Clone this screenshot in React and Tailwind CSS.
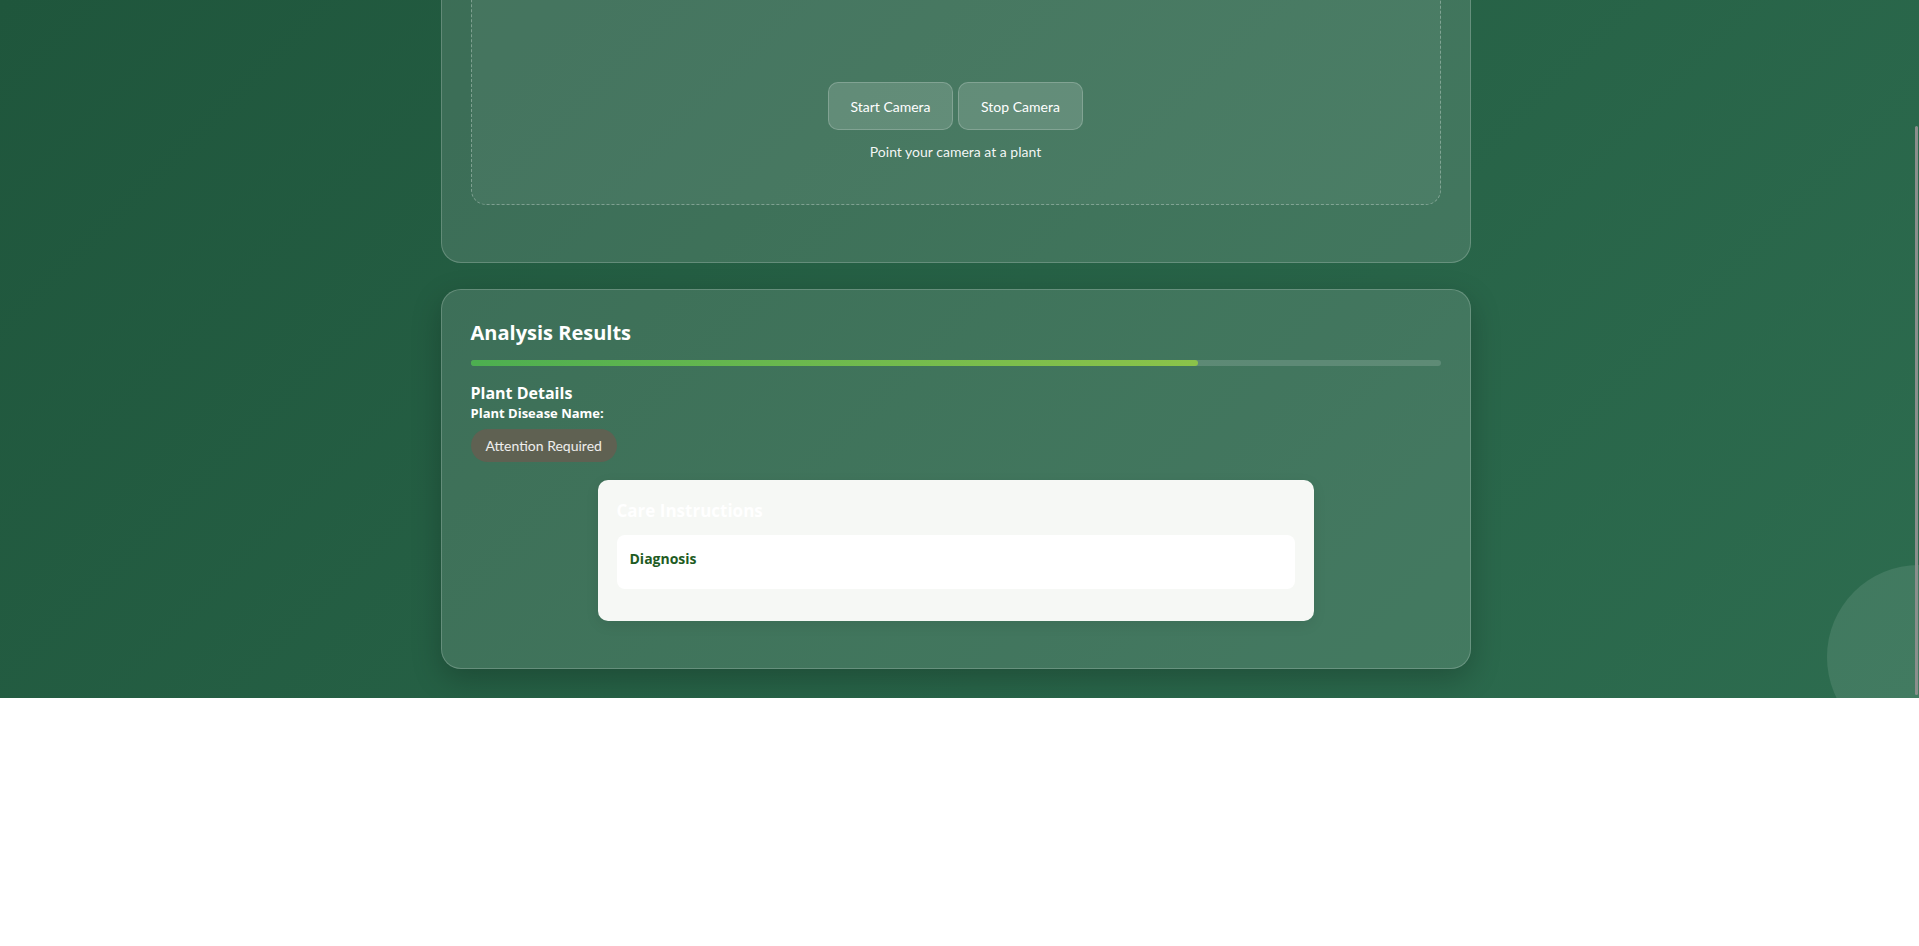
import React from "react";

const bold = "font-['Open_Sans',Lato,sans-serif] font-bold";

export default function App() {
  return (
    <div className="h-[946px] w-full bg-white font-[Lato,'Open_Sans',sans-serif]">
      <div className="relative flex h-[698px] overflow-hidden bg-[linear-gradient(135deg,#1f563c_0%,#2d6c4f_100%)]">
        {/* decorative circle */}
        <div className="pointer-events-none absolute bottom-[-51px] right-[-92px] h-[184px] w-[184px] rounded-full bg-white/10" />

        <main className="flex min-w-0 flex-1 flex-col items-center justify-end pb-[29px]">
          {/* Camera card */}
          <section className="w-[1030px] shrink-0 rounded-[20px] border border-white/20 bg-white/[0.12] p-[29px]">
            <div className="mb-[28px] flex flex-col items-center rounded-[15px] border border-dashed border-white/30 bg-white/[0.05] px-6 pt-[40px] pb-[42px]">
              <div className="h-[91px] w-full" />
              <div className="flex gap-[5px]">
                <button className="h-[48px] w-[125px] rounded-[10px] border border-white/20 bg-white/15 text-[14px] text-white">
                  Start Camera
                </button>
                <button className="h-[48px] w-[125px] rounded-[10px] border border-white/20 bg-white/15 text-[14px] text-white">
                  Stop Camera
                </button>
              </div>
              <p className="mt-3 text-[14px] leading-5 text-white/95">Point your camera at a plant</p>
            </div>
          </section>

          {/* Analysis card */}
          <section className="mt-[26px] flex w-[1030px] shrink-0 flex-col rounded-[20px] border border-white/20 bg-white/[0.12] p-[29px] shadow-[0_10px_30px_rgba(0,0,0,0.22)]">
            <h2 className={`${bold} text-[20px] leading-[28px] text-white`}>Analysis Results</h2>
            <div className="mt-[13px] h-[6px] w-full rounded-full bg-white/15">
              <div className="h-full w-3/4 rounded-full bg-linear-to-r from-[#4caf50] to-[#8bc34a]" />
            </div>
            <h3 className={`${bold} mt-[16px] text-[16px] leading-[22px] text-white`}>Plant Details</h3>
            <p className={`${bold} text-[13px] leading-[18px] text-white`}>Plant Disease Name:</p>
            <span className="mt-[7px] inline-flex h-[33px] items-center self-start rounded-full bg-[#5f6152] px-[15px] text-[14px] text-white/90">
              Attention Required
            </span>
            <div className="mx-auto mt-[18px] mb-[18px] w-[716px] rounded-[10px] bg-[#f6f8f5] px-[19px] pt-[19px] pb-[32px] shadow-[0_4px_14px_rgba(0,0,0,0.08)]">
              <h3 className={`${bold} text-[17px] leading-6 text-white`}>Care Instructions</h3>
              <div className="mt-[12px] rounded-lg bg-white px-[13px] pt-[15px] pb-[21px]">
                <h4 className={`${bold} text-[14px] leading-[18px] text-[#1e5b23]`}>Diagnosis</h4>
              </div>
            </div>
          </section>
        </main>

        {/* scrollbar */}
        <div className="relative z-10 flex w-2 shrink-0 flex-col justify-end pb-[3px]">
          <div className="ml-1 h-[569px] w-[3px] rounded-full bg-[#8a8f8c]" />
        </div>
      </div>
    </div>
  );
}
